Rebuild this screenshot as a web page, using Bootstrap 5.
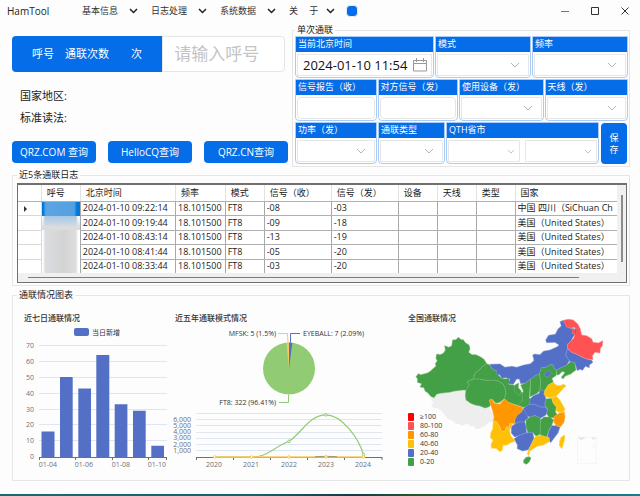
<!DOCTYPE html>
<html lang="zh-CN">
<head>
<meta charset="utf-8">
<meta name="viewport" content="width=device-width, initial-scale=1">
<title>HamTool</title>
<link href="https://cdn.jsdelivr.net/npm/bootstrap@5.3.0/dist/css/bootstrap.min.css" rel="stylesheet">
<style>
:root { --ham-blue: #056de8; --line: #e6e6e6; }
body { font-family: "Open Sans", "Noto Sans CJK SC", sans-serif; font-size: 9px; line-height: 12px; color: #222; background: #fdfdfd; }
.title-bar { height: 24px; padding: 0 10px 2px 7px; }
.brand { width: 75px; font-size: 10px; }
.menu-item { width: 69px; color: #333; font-size: 9px; line-height: 12px; gap: 11px; }
.menu-item.last { width: 57px; gap: 8px; }
.swatch { width: 12px; height: 12px; border: 1px solid #e4ecf6; border-radius: 4px; background: var(--ham-blue); padding: 0; }
.win-buttons { gap: 20px; }
.page-body { padding: 0 10px 0 12px; }
.top-grid { display: grid; grid-template-columns: 280fr 338fr; }
.call-group { height: 36px; margin: 12px 7px 0 0; }
.call-group .call-tag { width: 55%; background: var(--ham-blue); color: #fff; font-size: 11px; border-radius: 4px 0 0 4px; white-space: pre; }
.call-group .form-control { min-width: 0; font-size: 17px; padding: 0 11px; border: 1px solid var(--line); border-radius: 0 4px 4px 0; background: #fff; }
.form-control::placeholder { color: #c4c4c4; }
.info-list { margin-top: 13px; }
.info-line { font-size: 11px; line-height: 22px; padding-left: 8px; color: #222; }
.btn-ham { background: var(--ham-blue); color: #fff; font-size: 10px; line-height: 12px; border: 0; border-radius: 4px; padding: 0; }
.btn-ham:hover { background: #0459c0; color: #fff; }
.query-row { gap: 12px; margin: 12px 4px 0 0; }
.query-row .btn-ham { height: 22px; flex: 1 1 0; }
.group { border: 1px solid var(--line); padding: 0 1px 2px 2px; min-width: 0; }
.group > legend { float: none; width: auto; font-size: 9px; line-height: 12px; margin: 0; padding: 0 2px; color: #222; }
.form-lines { display: grid; gap: 1px; }
.form-line { display: grid; gap: 1px; }
.line-a { grid-template-columns: 139fr 96fr 96fr; }
.line-b { grid-template-columns: 82fr 81fr 85fr 84fr; }
.line-c { grid-template-columns: 82fr 67fr 153fr 28fr; }
.field { height: 42px; border: 1px solid #a9cbf7; border-radius: 0 0 4px 4px; background: #fff; min-width: 0; }
.field-name { display: block; height: 15px; line-height: 14px; background: var(--ham-blue); color: #fff; padding-left: 2px; white-space: nowrap; }
.field-body { margin: 2px 1px 1px; height: 22px; gap: 5px; }
.field-body .form-control, .field-body .form-select { height: 22px; min-height: 22px; min-width: 0; padding: 0 4px; border: 1px solid var(--line); border-radius: 1px; font-size: 9px; background-color: #fff; }
.field-body .form-control.soft { border-radius: 4px; }
.field-body .form-select { background-image: url("data:image/svg+xml,%3Csvg xmlns='http://www.w3.org/2000/svg' viewBox='0 0 10 6'%3E%3Cpath d='M1 1l4 4 4-4' fill='none' stroke='%23b4b4b4'/%3E%3C/svg%3E"); background-size: 10px 6px; background-position: right 8px center; }
.field-body .form-select.tight { background-size: 8px 5px; background-position: right 4px center; }
.date-box { border: 1px solid var(--line); background: #fff; padding-right: 4px; }
.field-body .date-box .form-control { border: 0; height: 20px; min-height: 20px; font-size: 13px; padding: 0 0 0 5px; color: #111; }
.save-btn { font-size: 9px; line-height: 12px; margin: 1px 1px 0; }
.log-group { margin-top: 2px; padding: 2px 2px 2px 4px; }
.grid-frame { border: 1px solid #707070; border-top-width: 2px; background: #f0f0f0; display: grid; grid-template-columns: minmax(0, 1fr) 9px; grid-template-rows: 88px 9px; }
.log-table { table-layout: fixed; width: 100%; height: 88px; background: #fff; color: #222; border-collapse: collapse; }
.log-table th, .log-table td { padding: 0 0 0 2px; border-right: 1px solid #a8a8a8; border-bottom: 1px solid #b0b0b0; white-space: nowrap; overflow: hidden; line-height: 12px; font-weight: 400; }
.log-table thead th { height: 16px; padding-left: 5px; border-right-color: #e2e2e2; }
.log-table tbody tr:last-child > * { border-bottom: 0; }
.log-table tr > :last-child { border-right: 0; }
.log-table tbody th { border-right-color: #d8d8d8; border-bottom-color: #d8d8d8; }
.log-table td.veil { border-bottom: 0; background: linear-gradient(90deg, #fff 2px, #dadde0 3px, #d3d3d3 60%, #dedede 35px, #fff 36px); }
.log-table td.veil-on { background: linear-gradient(90deg, #0078d7 2px, #5da4e2 4px, #559fe2 33px, #0078d7 35px); }
.log-table td.veil-next { background: linear-gradient(#9cc5ea00, #dcdcdc 80%), linear-gradient(90deg, #fff 2px, #a3c8ea 3px, #a3c8ea 35px, #fff 36px); }
.thumb-v { width: 2px; height: 67px; margin: 10px 0 0 4px; background: #8c8c8c; }
.thumb-h { width: 92%; height: 1px; margin: 4px 0 0 10px; background: #7c7c7c; }
.chart-group { margin-top: 3px; padding: 0; }
.chart-group > legend { margin-left: 4px; }
.charts { display: grid; grid-template-columns: 156fr 230fr 230fr; }
.charts svg { display: block; width: 100%; height: auto; }
.charts text { font-size: 7px; fill: #6e7079; dominant-baseline: central; }
.charts .chart-title { font-size: 8px; font-weight: 500; fill: #333; }
.charts .dark { fill: #333; }
.end { text-anchor: end; } .mid { text-anchor: middle; }
.bottom-edge { height: 2px; background: linear-gradient(90deg, #176a78, #0f6470 40%, #123c48 55%, #1f5a2c 65%, #0b6a78 80%, #12808f); }
</style>
<script src="https://cdn.jsdelivr.net/npm/bootstrap@5.3.0/dist/js/bootstrap.bundle.min.js"></script>
</head>
<body class="min-vh-100 d-flex flex-column">
<header class="title-bar d-flex align-items-center">
  <span class="brand">HamTool</span>
  <nav class="d-flex align-items-center flex-grow-1" aria-label="主菜单">
    <button type="button" class="menu-item btn p-0 border-0 d-flex align-items-center">基本信息<svg width="9" height="6" viewBox="0 0 9 6"><path d="M1 1l3.500 3.500L8 1" fill="none" stroke="#222" stroke-width="1.500"/></svg></button>
    <button type="button" class="menu-item btn p-0 border-0 d-flex align-items-center">日志处理<svg width="9" height="6" viewBox="0 0 9 6"><path d="M1 1l3.500 3.500L8 1" fill="none" stroke="#222" stroke-width="1.500"/></svg></button>
    <button type="button" class="menu-item btn p-0 border-0 d-flex align-items-center">系统数据<svg width="9" height="6" viewBox="0 0 9 6"><path d="M1 1l3.500 3.500L8 1" fill="none" stroke="#222" stroke-width="1.500"/></svg></button>
    <button type="button" class="menu-item last btn p-0 border-0 d-flex align-items-center">关　 于<svg width="9" height="6" viewBox="0 0 9 6"><path d="M1 1l3.500 3.500L8 1" fill="none" stroke="#222" stroke-width="1.500"/></svg></button>
    <button type="button" class="swatch" aria-label="主题颜色"></button>
  </nav>
  <div class="win-buttons d-flex align-items-center">
    <button type="button" class="btn p-0 border-0 d-flex" aria-label="最小化"><svg width="10" height="10"><path d="M1 5.500h8" stroke="#777"/></svg></button>
    <button type="button" class="btn p-0 border-0 d-flex" aria-label="最大化"><svg width="10" height="10"><path d="M1.500 1.500h7v7h-7z" fill="none" stroke="#333"/></svg></button>
    <button type="button" class="btn p-0 border-0 d-flex" aria-label="关闭"><svg width="10" height="10"><path d="M1.500 1.500l7 7m0-7l-7 7" stroke="#333"/></svg></button>
  </div>
</header>

<main class="page-body flex-grow-1">
  <div class="top-grid">
    <section>
      <div class="call-group d-flex">
        <label for="call" class="call-tag d-flex align-items-center justify-content-center">呼号　通联次数　　次</label>
        <input id="call" type="text" class="form-control w-auto flex-grow-1" size="4" placeholder="请输入呼号">
      </div>
      <div class="info-list">
        <div class="info-line">国家地区:</div>
        <div class="info-line">标准读法:</div>
      </div>
      <div class="query-row d-flex">
        <button type="button" class="btn btn-ham">QRZ.COM 查询</button>
        <button type="button" class="btn btn-ham">HelloCQ查询</button>
        <button type="button" class="btn btn-ham">QRZ.CN查询</button>
      </div>
    </section>

    <fieldset class="group">
      <legend>单次通联</legend>
      <div class="form-lines">
        <div class="form-line line-a">
          <div class="field"><label class="field-name" for="when">当前北京时间</label>
            <div class="field-body"><div class="date-box d-flex align-items-center"><input id="when" type="text" class="form-control" value="2024-01-10 11:54"><svg width="14" height="14" viewBox="0 0 14 14" class="flex-shrink-0"><path d="M.5 2.500h13v10.500H.5zM.5 5.500h13M3.500 0v4M10.500 0v4" fill="none" stroke="#999"/></svg></div></div></div>
          <div class="field"><label class="field-name" for="mode">模式</label>
            <div class="field-body"><select id="mode" class="form-select"><option></option></select></div></div>
          <div class="field"><label class="field-name" for="freq">频率</label>
            <div class="field-body"><select id="freq" class="form-select"><option></option></select></div></div>
        </div>
        <div class="form-line line-b">
          <div class="field"><label class="field-name" for="rst">信号报告（收）</label>
            <div class="field-body"><input id="rst" type="text" class="form-control soft"></div></div>
          <div class="field"><label class="field-name" for="rst2">对方信号（发）</label>
            <div class="field-body"><input id="rst2" type="text" class="form-control soft"></div></div>
          <div class="field"><label class="field-name" for="rig">使用设备（发）</label>
            <div class="field-body"><select id="rig" class="form-select"><option></option></select></div></div>
          <div class="field"><label class="field-name" for="ant">天线（发）</label>
            <div class="field-body"><select id="ant" class="form-select"><option></option></select></div></div>
        </div>
        <div class="form-line line-c">
          <div class="field"><label class="field-name" for="pwr">功率（发）</label>
            <div class="field-body"><select id="pwr" class="form-select"><option></option></select></div></div>
          <div class="field"><label class="field-name" for="kind">通联类型</label>
            <div class="field-body"><select id="kind" class="form-select"><option></option></select></div></div>
          <div class="field"><label class="field-name" for="prov">QTH省市</label>
            <div class="field-body d-flex"><select id="prov" class="form-select tight"><option></option></select><select class="form-select tight" aria-label="市"><option></option></select></div></div>
          <button type="button" class="btn btn-ham save-btn">保<br>存</button>
        </div>
      </div>
    </fieldset>
  </div>

  <fieldset class="group log-group">
    <legend>近5条通联日志</legend>
    <div class="grid-frame">
      <div class="overflow-hidden">
        <table class="log-table">
          <colgroup><col style="width:3.9%"><col style="width:6.500%"><col style="width:15.900%"><col style="width:8.300%"><col style="width:6.500%"><col style="width:11.200%"><col style="width:11.200%"><col style="width:6.500%"><col style="width:6.500%"><col style="width:6.500%"><col></colgroup>
          <thead><tr><th></th><th>呼号</th><th>北京时间</th><th>频率</th><th>模式</th><th>信号（收）</th><th>信号（发）</th><th>设备</th><th>天线</th><th>类型</th><th>国家</th></tr></thead>
          <tbody>
            <tr><th><svg width="4" height="6" viewBox="0 0 4 6" class="ms-1"><path d="M0 0l3 3-3 3z" fill="#333"/></svg></th><td class="veil veil-on"></td><td>2024-01-10 09:22:14</td><td>18.101500</td><td>FT8</td><td>-08</td><td>-03</td><td></td><td></td><td></td><td>中国 四川（SiChuan Ch</td></tr>
            <tr><th></th><td class="veil veil-next"></td><td>2024-01-10 09:19:44</td><td>18.101500</td><td>FT8</td><td>-09</td><td>-18</td><td></td><td></td><td></td><td>美国（United States）</td></tr>
            <tr><th></th><td class="veil"></td><td>2024-01-10 08:43:14</td><td>18.101500</td><td>FT8</td><td>-13</td><td>-19</td><td></td><td></td><td></td><td>美国（United States）</td></tr>
            <tr><th></th><td class="veil"></td><td>2024-01-10 08:41:44</td><td>18.101500</td><td>FT8</td><td>-05</td><td>-20</td><td></td><td></td><td></td><td>美国（United States）</td></tr>
            <tr><th></th><td class="veil"></td><td>2024-01-10 08:33:44</td><td>18.101500</td><td>FT8</td><td>-03</td><td>-20</td><td></td><td></td><td></td><td>美国（United States）</td></tr>
          </tbody>
        </table>
      </div>
      <div><div class="thumb-v"></div></div>
      <div><div class="thumb-h"></div></div>
    </div>
  </fieldset>

  <fieldset class="group chart-group">
    <legend>通联情况图表</legend>
    <div class="charts">
      <svg viewBox="13 301 156 179" role="img" aria-label="近七日通联情况">
        <text class="chart-title" x="24" y="317">近七日通联情况</text>
        <rect x="74" y="328" width="15" height="8" rx="2" fill="#5470c6"/>
        <text class="dark" x="92" y="332">当日新增</text>
        <path d="M39 345.500h128M39 361.500h128M39 377.500h128M39 393.500h128M39 409.500h128M39 424.500h128M39 440.500h128" stroke="#e0e6f1"/>
        <g class="end"><text x="34" y="345">70</text><text x="34" y="361">60</text><text x="34" y="377">50</text><text x="34" y="393">40</text><text x="34" y="409">30</text><text x="34" y="424">20</text><text x="34" y="440">10</text><text x="34" y="456">0</text></g>
        <path d="M41.500 457v-25.500h13V457zM60 457v-80h12.700v80zM78.300 457v-68.500H91V457zM96.300 457V355h13v102zM114.700 457v-52.700h12.700V457zM133 457v-46.300h12.700V457zM151.300 457v-11.300H164V457z" fill="#5470c6"/>
        <path d="M39 457.500h128M39.500 457v3M75.500 457v3M112.500 457v3M148.500 457v3M166.500 457v3" stroke="#6e7079"/>
        <g class="mid"><text x="48" y="464">01-04</text><text x="84" y="464">01-06</text><text x="121" y="464">01-08</text><text x="157" y="464">01-10</text></g>
      </svg>

      <svg viewBox="169 301 230 179" role="img" aria-label="近五年通联模式情况">
        <text class="chart-title" x="175" y="317">近五年通联模式情况</text>
        <circle cx="289" cy="368.500" r="26" fill="#91cc75"/>
        <path d="M289 368.500V342.500A26 26 0 0 1 292.400 342.700z" fill="#5470c6"/>
        <path d="M289 368.500L286.500 342.600A26 26 0 0 1 289 342.500z" fill="#fac858"/>
        <g fill="none"><path d="M278 333.500h9.500l.5 9" stroke="#fac858"/><path d="M300 333.500h-9.500v9" stroke="#5470c6"/><path d="M279 402.500h9.500v-8" stroke="#91cc75"/></g>
        <text class="dark end" x="276" y="333">MFSK: 5 (1.5%)</text>
        <text class="dark" x="303" y="333">EYEBALL: 7 (2.09%)</text>
        <text class="dark end" x="276" y="402">FT8: 322 (96.41%)</text>
        <path d="M196 413.500h186M196 419.500h186M196 425.500h186M196 432.500h186M196 438.500h186M196 444.500h186M196 450.500h186" stroke="#e0e6f1"/>
        <g class="end"><text x="191" y="419">6,000</text><text x="191" y="425">5,000</text><text x="191" y="431">4,000</text><text x="191" y="437">3,000</text><text x="191" y="444">2,000</text><text x="191" y="450">1,000</text></g>
        <path d="M196 457.500h186M196.500 457v3M233.500 457v3M270.500 457v3M307.500 457v3M344.500 457v3M382 457v3" stroke="#6e7079"/>
        <g fill="none"><path d="M214.500 457H251.500C268 457 272 448 289 441.300C301 434 309 414.800 326 414.800S359 440 363.500 454.500" stroke="#91cc75" stroke-width="1.200"/><path d="M214.500 457H363.500" stroke="#fac858" stroke-width="1.300"/></g>
        <path d="M315 456.700l11-.4 11 .4" stroke="#7c7a70" fill="none" stroke-width=".7"/>
        <g fill="#fff" stroke="#91cc75"><circle cx="289" cy="441.300" r="1.300"/><circle cx="326" cy="414.800" r="1.300"/><circle cx="363.500" cy="454.500" r="1.300"/></g>
        <g fill="#fff7e0" stroke="#fac858"><circle cx="214.500" cy="457" r="1.300"/><circle cx="251.500" cy="457" r="1.300"/><circle cx="289" cy="457" r="1.300"/><circle cx="326" cy="457" r="1.300"/><circle cx="363.500" cy="457" r="1.300"/></g>
        <g class="mid"><text x="214" y="464">2020</text><text x="251" y="464">2021</text><text x="289" y="464">2022</text><text x="326" y="464">2023</text><text x="363" y="464">2024</text></g>
      </svg>

      <svg viewBox="399 301 230 179" role="img" aria-label="全国通联情况">
        <text class="chart-title" x="408" y="317">全国通联情况</text>
        <g transform="translate(400 305) scale(.3333)" stroke-width="1.500" stroke-linejoin="round">
          <path fill="#eee" stroke="#eee" d="M92 276L102 278 120 265 148 262 165 258 190 255 196 258 198 285 212 295 240 303 268 307 276 325 282 345 280 352 270 350 262 354 258 362 250 364 240 370 228 371 220 362 212 364 206 357 195 358 185 362 178 356 165 355 160 348 145 342 138 332 130 325 124 316 115 310 100 308 94 302 100 294z"/>
          <g fill="#43a047" stroke="#78b878">
            <path d="M48 215L55 206 62 209 75 206 84 203 92 198 100 190 108 184 106 175 112 168 108 160 110 147 120 149 130 145 136 136 134 122 146 127 155 123 158 105 168 104 175 97 184 104 190 104 196 113 207 120 210 131 206 142 216 149 228 149 242 156 252 163 260 176 248 184 238 195 225 205 220 222 202 230 208 240 200 256 190 255 165 258 148 262 120 265 110 268 102 278 92 274 84 264 75 258 72 248 60 246 65 236 52 232 53 222z"/>
            <path d="M202 230L220 222 240 222 258 226 280 225 295 228 310 238 316 252 318 266 312 282 300 292 288 295 276 283 268 285 272 300 266 306 255 309 240 303 225 300 212 295 198 285 196 270 198 256 208 240z"/>
            <path d="M260 176L270 180 275 190 290 198 295 210 305 220 315 222 326 220 330 230 326 238 340 240 348 242 345 252 350 262 368 262 370 275 368 285 356 302 340 297 325 292 312 282 318 266 316 252 310 238 295 228 280 225 258 226 240 222 220 222 225 205 238 195 248 184z"/>
            <path d="M345 240L356 234 355 248 364 258 360 272 350 265 342 255z"/>
            <path d="M362 240L375 235 392 222 390 250 388 278 392 285 385 305 368 307 352 300 368 285 366 270 370 258z"/>
            <path d="M392 222L405 212 418 206 422 225 420 255 412 265 390 275z"/>
            <path d="M418 206L424 188 440 186 452 178 462 181 462 190 470 195 468 212 456 220 460 232 445 240 434 258 420 262 422 225z"/>
            <path d="M470 195L485 187 500 180 512 170 524 172 528 195 512 207 496 213 489 222 484 217 495 203 487 199 477 209 470 210z"/>
            <path d="M438 282L455 280 460 295 470 307 466 320 472 330 462 338 448 338 440 326 442 312 434 298z"/>
            <path d="M422 344L432 336 450 336 461 345 455 362 446 378 440 397 428 397 420 388z"/>
            <path d="M378 345L390 336 405 331 421 340 422 360 420 388 408 394 398 382 384 384 378 365z"/>
            <path d="M371 466L378 457 388 455 393 459 388 470 380 478 371 474z"/>
          </g>
          <g fill="#5470c6" stroke="#7e95d3">
            <path d="M270 178L300 177 315 187 335 184 350 187 372 180 392 176 402 166 398 150 404 147 420 149 430 139 450 135 472 125 477 120 465 112 440 113 437 105 446 91 466 88 474 72 484 63 480 50 490 46 500 62 512 70 528 72 526 86 518 98 512 110 502 118 503 131 497 150 508 168 500 180 485 187 470 195 462 190 462 181 452 178 440 186 424 188 418 206 405 212 392 222 375 235 362 236 358 222 350 222 340 238 326 236 330 222 318 218 305 220 300 210 290 208 290 198 275 190z"/>
            <path d="M503 131L515 142 530 148 545 156 560 162 574 165 579 172 568 180 568 188 556 184 548 196 540 193 532 197 524 172 512 170 508 168 497 150z"/>
            <path d="M434 210L438 202 448 197 453 204 446 214 438 216z"/>
            <path d="M390 282L400 272 418 265 418 256 434 258 436 275 438 282 434 298 438 307 420 306 402 298 388 298z"/>
            <path d="M370 310L388 298 402 298 420 306 438 307 442 316 438 330 421 340 405 331 390 336 378 332z"/>
            <path d="M343 340L352 326 358 318 372 312 378 325 385 338 376 346 372 356 360 350 345 357z"/>
            <path d="M334 364L345 357 360 350 375 352 378 365 380 383 362 390 344 396 334 384z"/>
            <path d="M342 402L355 392 378 384 398 382 402 400 394 418 386 434 368 438 352 431 352 419z"/>
            <path d="M455 362L468 362 480 366 474 384 462 400 452 413 442 400 446 380z"/>
          </g>
          <path fill="#ff5252" stroke="#ff8585" d="M490 46L505 43 520 45 534 58 541 72 545 90 560 92 575 101 579 112 595 114 609 107 607 122 601 130 600 144 585 142 577 152 579 164 560 162 545 155 530 147 515 142 503 130 502 118 512 110 522 98 524 86 514 84 516 74 530 72 522 67 512 70 500 66z"/>
          <path fill="none" stroke="#5470c6" stroke-width="3" d="M514 84l2-12M528 70l-2 16"/>
          <g fill="#ff9800" stroke="#ffb04a">
            <path d="M268 285L276 283 282 293 290 297 302 296 305 290 315 282 325 292 345 300 368 307 366 320 352 330 344 345 345 357 330 355 325 372 320 364 314 380 304 378 298 362 290 350 280 348 282 335 278 318 272 300z"/>
            <path d="M464 333L480 323 493 321 495 335 492 352 482 365 468 362 460 348z"/>
          </g>
          <g fill="#ffc107" stroke="#ffd04a">
            <path d="M280 348L290 350 298 362 304 378 314 380 320 364 325 372 330 355 338 360 328 375 332 392 346 408 330 414 322 420 309 421 307 436 300 440 288 430 275 430 273 418 279 406 271 398 272 385 278 372z"/>
            <path d="M434 258L445 240 460 232 468 240 480 242 490 238 499 242 490 250 480 262 468 274 455 278 438 276 432 268z"/>
            <path d="M455 278L470 274 480 286 488 300 495 312 490 322 478 322 468 318 470 307 460 295z"/>
            <path d="M405 396L420 390 448 398 448 410 430 420 412 424 398 432 388 440 386 453 382 446 386 434 394 418 402 402z"/>
            <path d="M483 397L494 390 494 403 486 431 478 422 479 408z"/>
          </g>
          <path d="M532.500 397h56v79h-56z" fill="none" stroke="#ececec"/>
          <path d="M534 398h22l-12 6zM576 398h10l-6 6zM540 470l5-10M580 430l4-12" fill="#e2e2e2" stroke="#e8e8e8"/>
        </g>
        <g><rect x="408" y="413" width="6" height="8" rx="1" fill="#f00"/><rect x="408" y="422" width="6" height="8" rx="1" fill="#ff5252"/><rect x="408" y="431" width="6" height="8" rx="1" fill="#ff9800"/><rect x="408" y="440" width="6" height="8" rx="1" fill="#ffc107"/><rect x="408" y="449" width="6" height="8" rx="1" fill="#5470c6"/><rect x="408" y="458" width="6" height="8" rx="1" fill="#43a047"/></g>
        <g><text class="dark" x="420" y="416">≥100</text><text class="dark" x="420" y="425">80-100</text><text class="dark" x="420" y="434">60-80</text><text class="dark" x="420" y="443">40-60</text><text class="dark" x="420" y="452">20-40</text><text class="dark" x="420" y="461">0-20</text></g>
      </svg>
    </div>
  </fieldset>
</main>
<footer class="bottom-edge mt-auto"></footer>
</body>
</html>
